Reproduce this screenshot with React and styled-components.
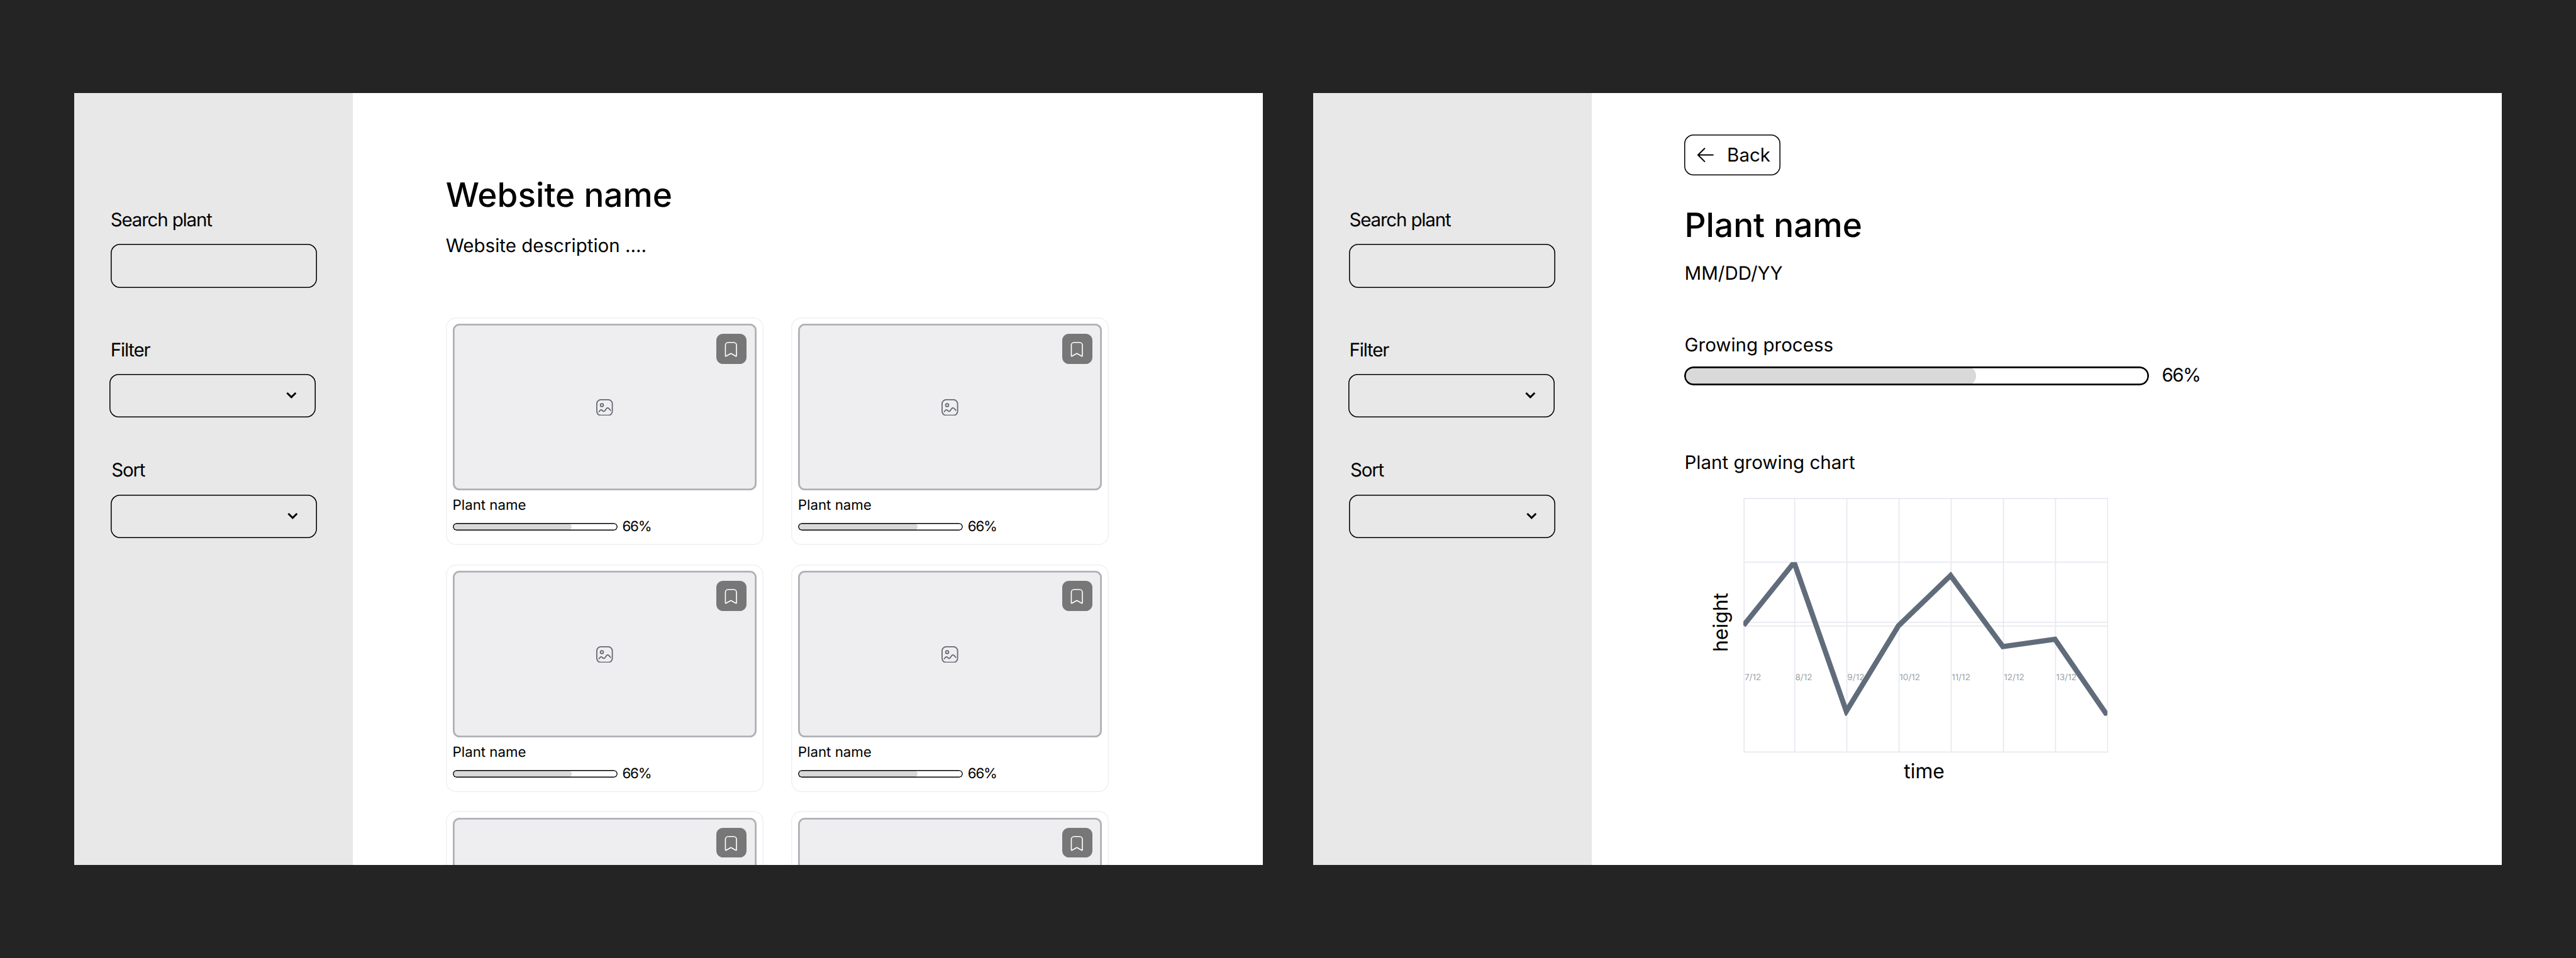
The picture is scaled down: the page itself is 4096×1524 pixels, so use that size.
import React from "react";
import styled, { createGlobalStyle } from "styled-components";

const GlobalStyle = createGlobalStyle`
  *, *::before, *::after { box-sizing: border-box; }
  html, body { margin: 0; padding: 0; background: #242424; }
  body { overflow: hidden; }
`;

const Board = styled.main`
  zoom: 1.476568;
  display: flex;
  gap: 54px;
  width: 2774px;
  height: 1032px;
  padding: 100px 80px;
  overflow: hidden;
  background: #242424;
  color: #000;
  font-family: Inter, "Liberation Sans", sans-serif;
  font-size: 20px;
  line-height: 24px;
  text-rendering: geometricPrecision;
`;

const Screen = styled.article`
  display: flex;
  flex: none;
  width: 1280px;
  height: 832px;
  overflow: hidden;
  background: #fff;
`;

/* ---------- Sidebar ---------- */

const Sidebar = styled.aside`
  display: flex;
  flex-direction: column;
  flex: none;
  width: 300px;
  height: 100%;
  padding: 125.4px 39px 0;
  background: #e8e8e8;
`;

const Field = styled.div`
  display: flex;
  flex-direction: column;
  gap: 13.5px;
  margin-bottom: ${(p) => p.$after}px;
`;

const FieldLabel = styled.label`
  padding-left: ${(p) => p.$indent || 0}px;
  letter-spacing: -0.04em;
  white-space: nowrap;
`;

const FieldBox = styled.div`
  display: flex;
  align-items: center;
  justify-content: flex-end;
  width: 222px;
  height: 47px;
  margin-left: ${(p) => p.$shift || 0}px;
  padding-right: 19px;
  border-radius: 10px;
  box-shadow: inset 0 0 0 1.05px #000;
`;

const ChevronIcon = () => (
  <svg width="14" height="10" viewBox="0 0 14 10" fill="none" stroke="#000" strokeWidth="2">
    <path d="M2.3 2 L7 6.7 L11.7 2" />
  </svg>
);

const FilterPanel = () => (
  <Sidebar>
    <Field $after={55.5}>
      <FieldLabel>Search plant</FieldLabel>
      <FieldBox />
    </Field>
    <Field $after={45.5}>
      <FieldLabel>Filter</FieldLabel>
      <FieldBox $shift={-1}>
        <ChevronIcon />
      </FieldBox>
    </Field>
    <Field $after={0}>
      <FieldLabel $indent={1}>Sort</FieldLabel>
      <FieldBox>
        <ChevronIcon />
      </FieldBox>
    </Field>
  </Sidebar>
);

/* ---------- Shared ---------- */

const Content = styled.section`
  display: flex;
  flex-direction: column;
  flex: 1;
  align-items: flex-start;
  padding: ${(p) => p.$top}px 0 0 100px;
`;

const Title = styled.h1`
  margin: 0 0 ${(p) => p.$after}px;
  font-size: 36px;
  font-weight: 500;
  line-height: 44px;
  white-space: nowrap;
`;

const Text = styled.p`
  margin: 0 0 ${(p) => p.$after || 0}px;
  white-space: nowrap;
`;

const Track = styled.div`
  position: relative;
  flex: none;
  width: ${(p) => p.$width}px;
  height: ${(p) => p.$height}px;
  border-radius: ${(p) => p.$height / 2}px;
  background: #fff;
  overflow: hidden;

  &::after {
    content: "";
    position: absolute;
    inset: 0;
    border-radius: inherit;
    box-shadow: inset 0 0 0 ${(p) => p.$line}px #000;
  }
`;

const TrackFill = styled.div`
  width: ${(p) => p.$width}px;
  height: 100%;
  border-radius: inherit;
  background: #d9d9d9;
`;

/* ---------- Plant cards ---------- */

const CardGrid = styled.div`
  display: grid;
  grid-template-columns: 342px 342px;
  gap: 20.5px 30px;
`;

const Card = styled.div`
  display: flex;
  flex-direction: column;
  height: 245.5px;
  padding: 6.9px 7.3px 0;
  border-radius: 11px;
  box-shadow: inset 0 0 0 1px #f0f0f0;
`;

const Thumb = styled.div`
  position: relative;
  display: flex;
  flex: none;
  align-items: center;
  justify-content: center;
  width: 327.4px;
  height: 179.6px;
  padding-top: 0.6px;
  border-radius: 7.2px;
  background: #eeeef0;
  box-shadow: inset 0 0 0 1.9px #b0b1b6;
`;

const SaveButton = styled.span`
  position: absolute;
  top: 10.8px;
  right: 10.6px;
  width: 32.4px;
  height: 32.4px;
  border-radius: 7.2px;
  background: #777778;

  svg { display: block; }
`;

const CardName = styled.div`
  margin-top: 7.1px;
  font-size: 15.1px;
  line-height: 18px;
  white-space: nowrap;
`;

const CardProgress = styled.div`
  display: flex;
  align-items: center;
  gap: 5px;
  height: 18px;
  margin-top: 5.1px;
  font-size: 15.1px;
  line-height: 18px;
  letter-spacing: -0.05em;
`;

const BookmarkIcon = () => (
  <svg width="32.4" height="32.4" viewBox="0 0 32.4 32.4" fill="none" stroke="#fff" strokeWidth="1.1" strokeLinejoin="round">
    <path d="M9.8 12.3 A3 3 0 0 1 12.8 9.3 H18.7 A3 3 0 0 1 21.7 12.3 V23.6 Q21.7 24.5 20.9 24.1 L15.75 21.2 L10.6 24.1 Q9.8 24.5 9.8 23.6 Z" />
  </svg>
);

const ImageIcon = () => (
  <svg width="18" height="18" viewBox="0 0 18 18" fill="none" stroke="#65676f" strokeWidth="1.2" strokeLinecap="round" strokeLinejoin="round">
    <rect x="0.65" y="0.65" width="16.7" height="16.7" rx="4.3" />
    <circle cx="6.1" cy="6.5" r="1.6" />
    <path d="M3 13.5 L4.3 12 C4.9 11.3 5.8 11.3 6.4 11.9 L7.2 12.7 C7.8 13.3 8.7 13.2 9.2 12.6 L11.2 10 C11.8 9.2 12.9 9.2 13.5 9.9 L15.4 12" />
  </svg>
);

const PlantCard = ({ plant }) => (
  <Card>
    <Thumb>
      <ImageIcon />
      <SaveButton>
        <BookmarkIcon />
      </SaveButton>
    </Thumb>
    {plant.name && (
      <>
        <CardName>{plant.name}</CardName>
        <CardProgress>
          <Track $width={177.8} $height={8.4} $line={1}>
            <TrackFill $width={128.6} />
          </Track>
          {plant.progress}
        </CardProgress>
      </>
    )}
  </Card>
);

const plants = [
  { id: 1, name: "Plant name", progress: "66%" },
  { id: 2, name: "Plant name", progress: "66%" },
  { id: 3, name: "Plant name", progress: "66%" },
  { id: 4, name: "Plant name", progress: "66%" },
  { id: 5 },
  { id: 6 },
];

/* ---------- Plant detail ---------- */

const BackButton = styled.button`
  display: flex;
  align-items: center;
  width: 103px;
  height: 44px;
  margin: 0 0 31.7px;
  padding: 0.5px 0 0 13px;
  gap: 13.8px;
  border: 0;
  border-radius: 10px;
  background: #fff;
  box-shadow: inset 0 0 0 1.05px #000;
  color: inherit;
  font: inherit;
`;

const ArrowLeftIcon = () => (
  <svg width="19" height="16" viewBox="0 0 19 16" fill="none" stroke="#000" strokeWidth="1.35" strokeLinecap="round" strokeLinejoin="round">
    <path d="M17.5 7.8 H1.3 M8.4 0.8 L1.3 7.8 L8.4 14.8" />
  </svg>
);

const GrowthRow = styled.div`
  display: flex;
  align-items: center;
  gap: 14px;
  height: 20px;
  margin-bottom: 72.3px;
  letter-spacing: -0.05em;
`;

const ChartBlock = styled.figure`
  display: grid;
  grid-template-columns: 24px 393px;
  grid-template-rows: 275px 26px;
  column-gap: 12px;
  row-gap: 7px;
  margin: 25px 0 0 27px;
`;

const AxisY = styled.span`
  align-self: center;
  justify-self: center;
  margin-bottom: 6.6px;
  writing-mode: vertical-rl;
  transform: rotate(180deg);
  font-size: 21.6px;
  line-height: 26px;
`;

const AxisX = styled.figcaption`
  grid-column: 2;
  padding-left: 173.2px;
  font-size: 21.6px;
  line-height: 26px;
`;

const columns = [0.8, 55.3, 111.5, 167.7, 223.8, 280.1, 336.2, 392.4];
const rows = [0.7, 69.4, 134, 138, 273.9];
const dates = ["7/12", "8/12", "9/12", "10/12", "11/12", "12/12", "13/12"];
const heights = [137.5, 69.6, 230, 137.8, 83.6, 160.2, 152.4, 234.2];

const GrowthChart = () => (
  <svg width="393" height="275" viewBox="0 0 393 275" fill="none">
    <clipPath id="plot">
      <rect x="0" y="69.2" width="392" height="165.6" />
    </clipPath>
    <g stroke="#e8e9f0" strokeWidth="1.2">
      {columns.map((x) => (
        <path key={x} d={`M${x} 0.2 V274.4`} />
      ))}
      {rows.map((y) => (
        <path key={y} d={`M0.2 ${y} H393`} />
      ))}
    </g>
    <g fill="#9a9fa7" fontSize="9.2">
      {dates.map((d, i) => (
        <text key={d} x={columns[i] + 0.5} y="196.3">{d}</text>
      ))}
    </g>
    <polyline
      clipPath="url(#plot)"
      stroke="#616c7b"
      strokeWidth="5.6"
      strokeMiterlimit="10"
      points={columns.map((x, i) => `${x - 0.6},${heights[i]}`).join(" ")}
    />
  </svg>
);

export default function App() {
  return (
    <>
      <GlobalStyle />
      <Board>
        <Screen>
          <FilterPanel />
          <Content $top={88.3}>
            <Title $after={21}>Website name</Title>
            <Text $after={64.7}>Website description ....</Text>
            <CardGrid>
              {plants.map((plant) => (
                <PlantCard key={plant.id} plant={plant} />
              ))}
            </CardGrid>
          </Content>
        </Screen>
        <Screen>
          <FilterPanel />
          <Content $top={45}>
            <BackButton>
              <ArrowLeftIcon />
              Back
            </BackButton>
            <Title $after={18.7}>Plant name</Title>
            <Text $after={53}>MM/DD/YY</Text>
            <Text $after={10.6}>Growing process</Text>
            <GrowthRow>
              <Track $width={500} $height={20} $line={1.8}>
                <TrackFill $width={314} />
              </Track>
              66%
            </GrowthRow>
            <Text>Plant growing chart</Text>
            <ChartBlock>
              <AxisY>height</AxisY>
              <GrowthChart />
              <AxisX>time</AxisX>
            </ChartBlock>
          </Content>
        </Screen>
      </Board>
    </>
  );
}
